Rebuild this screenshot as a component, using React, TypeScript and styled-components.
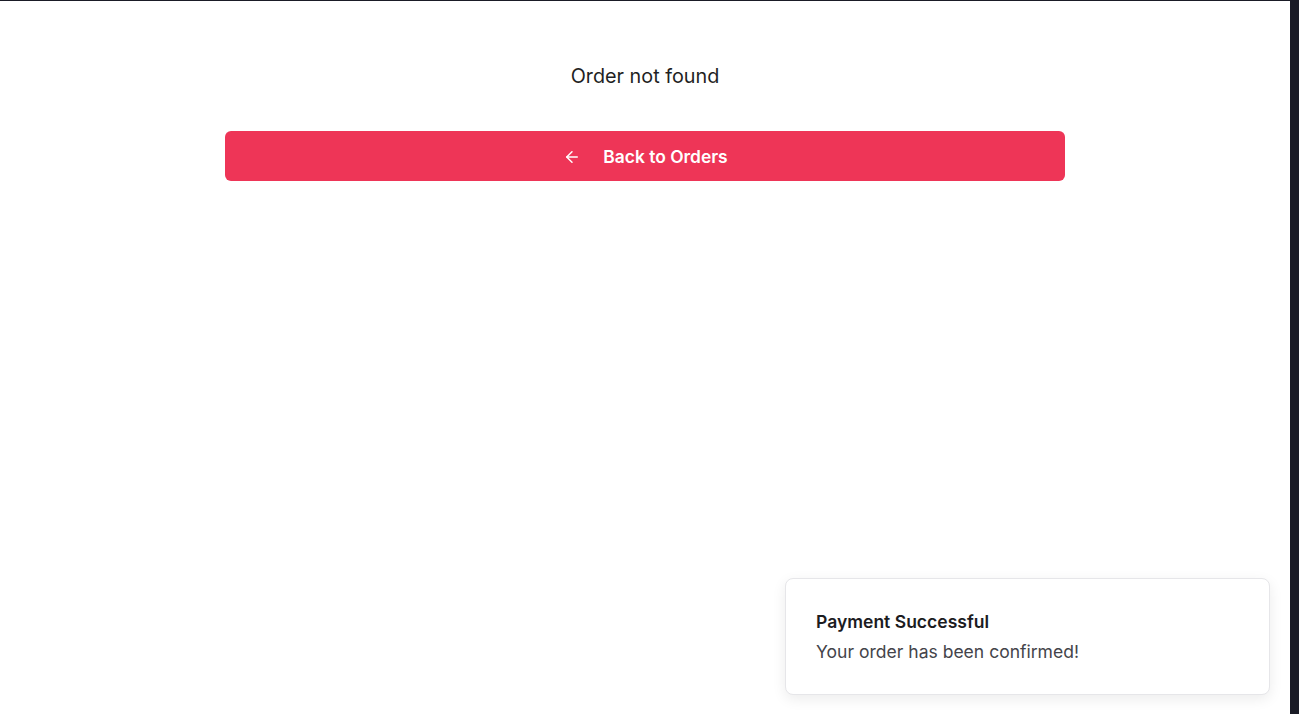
import React from "react";
import styled, { createGlobalStyle } from "styled-components";
import { ArrowLeft } from "lucide-react";

const GlobalStyle = createGlobalStyle`
  html, body {
    margin: 0;
    padding: 0;
    background: #1a1b26;
    font-family: Inter, "Noto Sans", sans-serif;
  }
  * { box-sizing: border-box; }
`;

const Page = styled.main`
  position: relative;
  margin-top: 1px;
  width: 1290px;
  height: 713px;
  background: #ffffff;
  display: flex;
  flex-direction: column;
  align-items: center;
  padding-top: 62px;
`;

const Message = styled.p`
  margin: 0;
  font-size: 19.8px;
  line-height: 27px;
  color: #1f1f23;
  font-weight: 400;
`;

const BackButton = styled.button`
  margin-top: 41px;
  width: 840px;
  height: 50px;
  border: none;
  border-radius: 6px;
  background: #ee3557;
  color: #ffffff;
  display: flex;
  align-items: center;
  justify-content: center;
  gap: 22px;
  padding: 1px 0 0 1px;
  font-family: Inter, "Noto Sans", sans-serif;
  font-size: 17.4px;
  font-weight: 600;
  cursor: pointer;
`;

const Toast = styled.div`
  position: absolute;
  right: 20px;
  bottom: 19px;
  width: 485px;
  height: 117px;
  padding: 31px 30px 28px;
  background: #ffffff;
  border: 1px solid #e6e6e9;
  border-radius: 8px;
  box-shadow: 0 4px 14px rgba(0, 0, 0, 0.08);
  display: flex;
  flex-direction: column;
  gap: 6px;
`;

const ToastTitle = styled.div`
  font-size: 17.55px;
  line-height: 24px;
  font-weight: 600;
  color: #1c1c1f;
`;

const ToastText = styled.div`
  font-size: 17.55px;
  line-height: 24px;
  color: #44444a;
`;

export default function App() {
  return (
    <>
      <GlobalStyle />
      <Page>
        <Message>Order not found</Message>
        <BackButton>
          <ArrowLeft size={18} strokeWidth={2} />
          <span>Back to Orders</span>
        </BackButton>
        <Toast>
          <ToastTitle>Payment Successful</ToastTitle>
          <ToastText>Your order has been confirmed!</ToastText>
        </Toast>
      </Page>
    </>
  );
}
